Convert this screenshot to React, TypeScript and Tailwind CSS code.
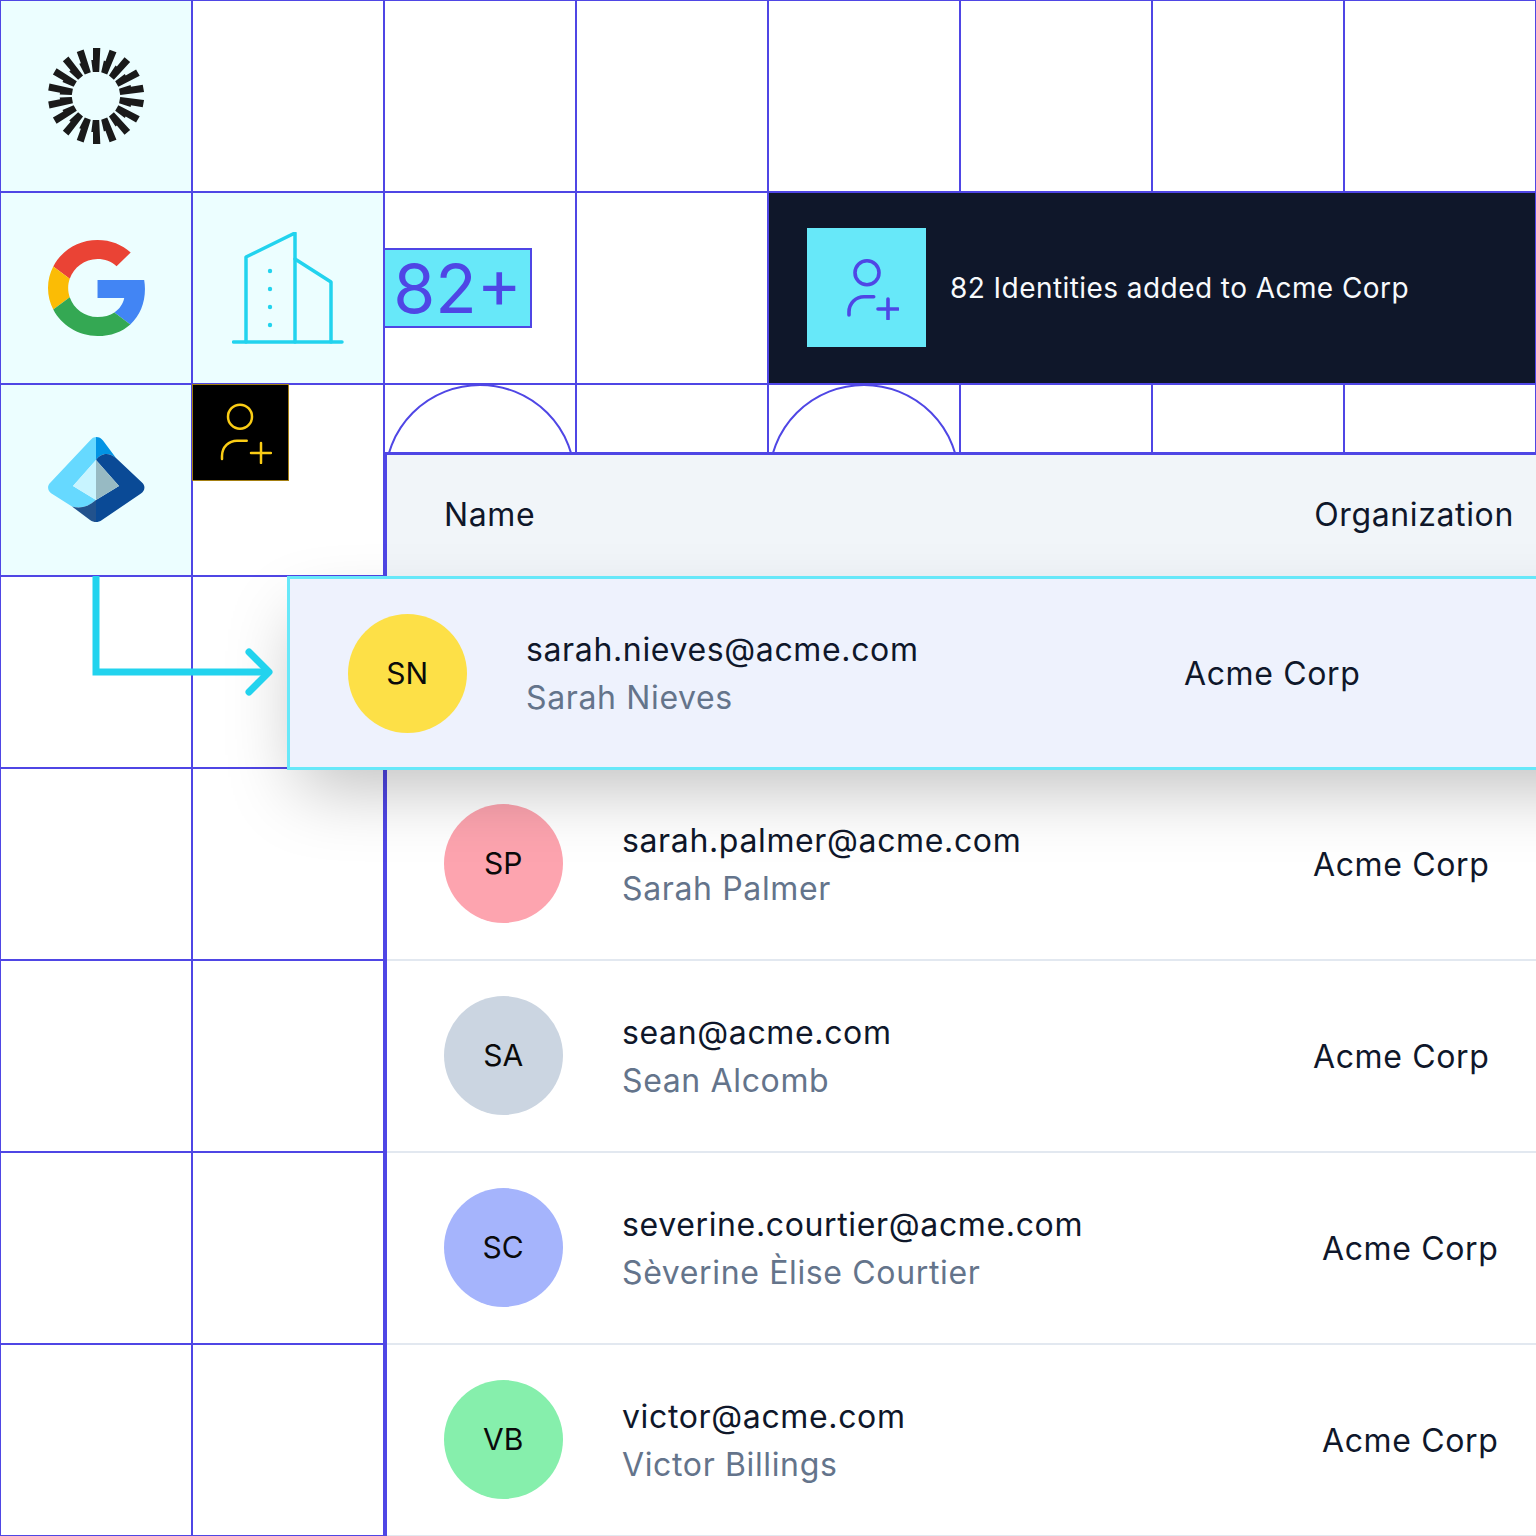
import type { ReactNode } from "react";

const cyanCells = [0, 8, 9, 16];

const people = [
  { initials: "SP", email: "sarah.palmer@acme.com", name: "Sarah Palmer", avatar: "bg-[#fda4af]", orgPad: "ml-[691px]" },
  { initials: "SA", email: "sean@acme.com", name: "Sean Alcomb", avatar: "bg-[#cbd5e1]", orgPad: "ml-[691px]" },
  { initials: "SC", email: "severine.courtier@acme.com", name: "Sèverine Èlise Courtier", avatar: "bg-[#a5b4fc]", orgPad: "ml-[700px]" },
  { initials: "VB", email: "victor@acme.com", name: "Victor Billings", avatar: "bg-[#86efac]", orgPad: "ml-[700px]" },
];

function SunLogo() {
  const bars = [-80, -60, -40, -20, 0, 20, 40, 60, 80];
  return (
    <svg width="96" height="96" viewBox="-48 -48 96 96" fill="#1a1a1a">
      {bars.map((angle) => (
        <g key={angle}>
          <path transform={`rotate(${angle})`} d="M-3-48H4.3L3.2-24H-3.2L-4.7-36H-3Z" />
          <path transform={`scale(1,-1) rotate(${angle})`} d="M-3-48H4.3L3.2-24H-3.2L-4.7-36H-3Z" />
        </g>
      ))}
    </svg>
  );
}

function GoogleLogo() {
  return (
    <svg width="97" height="96" viewBox="0 0 47 48" preserveAspectRatio="none" className="ml-px">
      <path fill="#EA4335" d="M24 9.5c3.54 0 6.71 1.22 9.21 3.6l6.85-6.85C35.9 2.38 30.47 0 24 0 14.62 0 6.51 5.38 2.56 13.22l7.98 6.19C12.43 13.72 17.74 9.5 24 9.5z" />
      <path fill="#4285F4" d="M46.98 24.55c0-1.57-.15-3.09-.38-4.55H24v9.02h12.94c-.58 2.96-2.26 5.48-4.78 7.18l7.73 6c4.51-4.18 7.09-10.36 7.09-17.65z" />
      <path fill="#FBBC05" d="M10.53 28.59c-.48-1.45-.76-2.99-.76-4.59s.27-3.14.76-4.59l-7.98-6.19C.92 16.46 0 20.12 0 24c0 3.88.92 7.54 2.56 10.78l7.97-6.19z" />
      <path fill="#34A853" d="M24 48c6.48 0 11.93-2.13 15.89-5.81l-7.73-6c-2.15 1.45-4.92 2.3-8.16 2.3-6.26 0-11.57-4.22-13.47-9.91l-7.98 6.19C6.51 42.62 14.62 48 24 48z" />
    </svg>
  );
}

function BuildingIcon() {
  return (
    <svg width="112" height="112" viewBox="0 0 112 112" fill="none" stroke="#22d3ee" strokeWidth="3.5" strokeLinecap="round" strokeLinejoin="round">
      <path d="M1.5 110H110" />
      <path d="M14 110V25L63 1V110" />
      <path d="M63 27L99 50V110" />
      <g stroke="none" fill="#22d3ee">
        <circle cx="38" cy="39" r="2.2" />
        <circle cx="38" cy="57" r="2.2" />
        <circle cx="38" cy="75" r="2.2" />
        <circle cx="38" cy="93" r="2.2" />
      </g>
    </svg>
  );
}

function EntraLogo() {
  return (
    <svg width="98" height="86" viewBox="0 0 98 86" className="ml-[2px]">
      <path fill="#66d9ff" d="M42.5 3A7.5 7.5 0 0 1 48 0V23L25 49L48 63C40 70 32 72 24 69.5L3.5 56.5C-.5 54-1 49 2 46Z" />
      <path fill="#0294e4" d="M48 0C51 0 53 1 55 3.5L68 21C60 14 52 17 48 23Z" />
      <path fill="#0a4a96" d="M48 23C52 17 60 14 68 21L94.5 46C97.5 49 97 54 93 56.5L54 83C52 84.5 50 85 48 85V63L71 49Z" />
      <path fill="#21528d" d="M24 69.5C32 72 40 70 48 63V85C46 85 44 84.5 42 83Z" />
      <path fill="#c8f4ff" d="M48 23V63L25 49Z" />
      <path fill="#97bac3" d="M48 23L71 49L48 63Z" />
    </svg>
  );
}

function UserPlus({ color, stroke, className }: { color: string; stroke: number; className: string }) {
  return (
    <svg width="52" height="62" viewBox="0 0 52 62" fill="none" stroke={color} strokeWidth={stroke} strokeLinecap="round" className={className}>
      <circle cx="20" cy="14.7" r="12" />
      <path d="M2 57V54C2 45 9 38.7 17 38.7H26.7" />
      <path d="M31 51H51M41 41V61" />
    </svg>
  );
}

function Avatar({ initials, className }: { initials: string; className: string }) {
  return (
    <div className={`w-[119px] h-[119px] shrink-0 rounded-full flex items-center justify-center text-[30px] text-[#0a0a0a] ${className}`}>
      {initials}
    </div>
  );
}

function Identity({ email, name }: { email: string; name: string }) {
  return (
    <div className="ml-[59.3px] w-[0px] mt-[2px] whitespace-nowrap text-[32px] leading-[48px] tracking-[0.64px]">
      <div className="text-[#0f172a]">{email}</div>
      <div className="text-[#64748b]">{name}</div>
    </div>
  );
}

function Overlay({ className, children }: { className: string; children?: ReactNode }) {
  return <div className={`absolute ${className}`}>{children}</div>;
}

export default function App() {
  return (
    <div className="relative w-[1536px] h-[1536px] overflow-hidden bg-white font-['Inter',sans-serif]">
      <div className="grid grid-cols-[repeat(8,192px)] auto-rows-[192px]">
        {Array.from({ length: 64 }, (_, i) => (
          <div
            key={i}
            className={`flex items-center justify-center border border-[#4f46e5] ${cyanCells.includes(i) ? "bg-[#ecfeff]" : ""}`}
          >
            {i === 0 && <SunLogo />}
            {i === 8 && <GoogleLogo />}
            {i === 9 && <BuildingIcon />}
            {i === 16 && <EntraLogo />}
          </div>
        ))}
      </div>

      {/* half circles peeking out above the table */}
      <Overlay className="left-[384px] top-[384px] w-[192px] h-[192px] rounded-full border-2 border-[#4f46e5]" />
      <Overlay className="left-[768px] top-[384px] w-[192px] h-[192px] rounded-full border-2 border-[#4f46e5]" />

      <Overlay className="left-[383px] top-[248px] w-[149px] h-[80px] flex items-center justify-center bg-[#67e8f9] border-2 border-[#4f46e5] text-[68px] leading-none text-[#4f46e5]">
        82+
      </Overlay>

      <Overlay className="left-[192px] top-[384px] w-[97px] h-[97px] flex items-center justify-center bg-black border border-[#a47f12]">
        <UserPlus color="#facc15" stroke={2.5} className="ml-[11px]" />
      </Overlay>

      <Overlay className="left-[768px] top-[192px] w-[768px] h-[192px] flex items-center gap-6 pl-[38px] bg-[#0f172a] border border-[#4f46e5]">
        <div className="w-[119px] h-[119px] mb-px flex items-center justify-center bg-[#67e8f9]">
          <UserPlus color="#4f46e5" stroke={3.6} className="ml-[12px] mt-[3px]" />
        </div>
        <span className="text-[28px] tracking-[0.44px] text-[#f8fafc]">82 Identities added to Acme Corp</span>
      </Overlay>

      <Overlay className="left-[384px] top-[452px] bottom-0 w-[1152px] border-l-[3px] border-t-[3px] border-[#4f46e5] bg-white">
        <div className="h-[121px] flex items-center justify-between pl-[57px] pr-[22px] pb-[2px] bg-[#f1f5f9] text-[32px] tracking-[0.64px] text-[#0f172a]">
          <span>Name</span>
          <span>Organization</span>
        </div>
        <div className="relative z-10 -ml-[100px] -mr-[100px] -mb-[1px] h-[194px] flex items-center pl-[57.7px] bg-[#eef2fd] border-[3px] border-[#67e8f9] shadow-[0_30px_70px_-12px_rgba(0,0,0,0.25)]">
          <Avatar initials="SN" className="bg-[#fde047]" />
          <Identity email="sarah.nieves@acme.com" name="Sarah Nieves" />
          <span className="ml-[658px] mt-[2px] text-[32px] tracking-[0.64px] text-[#0f172a]">Acme Corp</span>
        </div>
        {people.map((person) => (
          <div key={person.email} className="h-[192px] flex items-center pl-[56.7px] pb-px border-b-2 border-[#e2e8f0]">
            <Avatar initials={person.initials} className={person.avatar} />
            <Identity email={person.email} name={person.name} />
            <span className={`${person.orgPad} mt-[2px] whitespace-nowrap text-[32px] tracking-[0.64px] text-[#0f172a]`}>Acme Corp</span>
          </div>
        ))}
      </Overlay>

      {/* connector from the identity provider to the new row */}
      <Overlay className="left-[92px] top-[576px] z-20">
        <svg width="184" height="124" viewBox="0 0 184 124" fill="none" stroke="#22d3ee" strokeWidth="7">
          <path d="M4 0V96H174" />
          <path d="M157 76L177 96L157 116" strokeLinecap="round" strokeLinejoin="round" />
        </svg>
      </Overlay>
    </div>
  );
}
